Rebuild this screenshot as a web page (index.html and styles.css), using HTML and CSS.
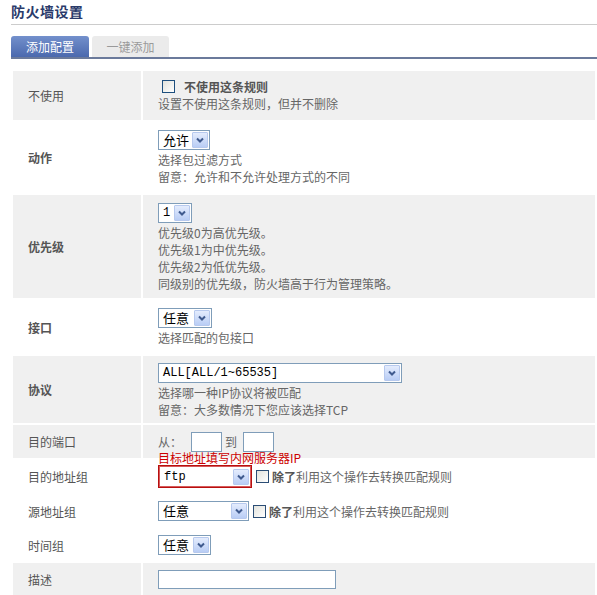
FILE: index.html
```html
<!DOCTYPE html>
<html lang="zh-CN">
<head>
<meta charset="utf-8">
<title>防火墙设置</title>
<link rel="stylesheet" href="styles.css">
</head>
<body>
<div class="page">
  <h1 class="title">防火墙设置</h1>
  <div class="tabs">
    <span class="tab active">添加配置</span>
    <span class="tab">一键添加</span>
  </div>
  <table class="form">
    <tr class="gray r1">
      <th>不使用</th>
      <td>
        <div class="line"><span class="check"></span><b class="strong">不使用这条规则</b></div>
        <div class="line">设置不使用这条规则，但并不删除</div>
      </td>
    </tr>
    <tr class="white r2">
      <th class="bold">动作</th>
      <td>
        <div class="selrow"><span class="select w52"><span class="val">允许</span><span class="arrow"><svg width="14" height="14" viewBox="0 0 14 14"><path d="M4 5.5 L7 8.5 L10 5.5" stroke="#3f5a8e" stroke-width="2" fill="none"/></svg></span></span></div>
        <div class="line">选择包过滤方式</div>
        <div class="line">留意：允许和不允许处理方式的不同</div>
      </td>
    </tr>
    <tr class="gray r3">
      <th class="bold">优先级</th>
      <td>
        <div class="selrow"><span class="select w34"><span class="val mono">1</span><span class="arrow"><svg width="14" height="14" viewBox="0 0 14 14"><path d="M4 5.5 L7 8.5 L10 5.5" stroke="#3f5a8e" stroke-width="2" fill="none"/></svg></span></span></div>
        <div class="line">优先级0为高优先级。</div>
        <div class="line">优先级1为中优先级。</div>
        <div class="line">优先级2为低优先级。</div>
        <div class="line">同级别的优先级，防火墙高于行为管理策略。</div>
      </td>
    </tr>
    <tr class="white r4">
      <th class="bold">接口</th>
      <td>
        <div class="selrow"><span class="select w54"><span class="val">任意</span><span class="arrow"><svg width="14" height="14" viewBox="0 0 14 14"><path d="M4 5.5 L7 8.5 L10 5.5" stroke="#3f5a8e" stroke-width="2" fill="none"/></svg></span></span></div>
        <div class="line">选择匹配的包接口</div>
      </td>
    </tr>
    <tr class="gray r5">
      <th class="bold">协议</th>
      <td>
        <div class="selrow"><span class="select w244"><span class="val mono">ALL[ALL/1~65535]</span><span class="arrow"><svg width="14" height="14" viewBox="0 0 14 14"><path d="M4 5.5 L7 8.5 L10 5.5" stroke="#3f5a8e" stroke-width="2" fill="none"/></svg></span></span></div>
        <div class="line">选择哪一种IP协议将被匹配</div>
        <div class="line">留意：大多数情况下您应该选择TCP</div>
      </td>
    </tr>
    <tr class="gray r6">
      <th>目的端口</th>
      <td class="mid">
        <div class="inline">从：<span class="input w31 gap-l"></span><span class="to">到</span><span class="input w31"></span></div>
      </td>
    </tr>
    <tr class="white r7">
      <th>目的地址组</th>
      <td class="mid">
        <div class="inline anchor">
          <span class="note">目标地址填写内网服务器IP</span>
          <span class="select w94 alert"><span class="val mono">ftp</span><span class="arrow"><svg width="14" height="14" viewBox="0 0 14 14"><path d="M4 5.5 L7 8.5 L10 5.5" stroke="#3f5a8e" stroke-width="2" fill="none"/></svg></span></span>
          <span class="check small"></span><b class="strong">除了</b><span>利用这个操作去转换匹配规则</span>
        </div>
      </td>
    </tr>
    <tr class="white r8">
      <th>源地址组</th>
      <td class="mid">
        <div class="inline">
          <span class="select w91"><span class="val">任意</span><span class="arrow"><svg width="14" height="14" viewBox="0 0 14 14"><path d="M4 5.5 L7 8.5 L10 5.5" stroke="#3f5a8e" stroke-width="2" fill="none"/></svg></span></span>
          <span class="check small"></span><b class="strong">除了</b><span>利用这个操作去转换匹配规则</span>
        </div>
      </td>
    </tr>
    <tr class="white r9">
      <th>时间组</th>
      <td class="mid">
        <div class="inline"><span class="select w53"><span class="val">任意</span><span class="arrow"><svg width="14" height="14" viewBox="0 0 14 14"><path d="M4 5.5 L7 8.5 L10 5.5" stroke="#3f5a8e" stroke-width="2" fill="none"/></svg></span></span></div>
      </td>
    </tr>
    <tr class="gray r10">
      <th>描述</th>
      <td class="mid">
        <div class="inline"><span class="input w178"></span></div>
      </td>
    </tr>
  </table>
</div>
</body>
</html>
```

FILE: styles.css
```css
html, body {
  margin: 0;
  padding: 0;
  background: #ffffff;
}
body {
  font-family: "Noto Sans CJK SC", "Liberation Sans", sans-serif;
  font-size: 12px;
  color: #666666;
  overflow: hidden;
}
.page {
  padding-left: 11px;
}
.title {
  margin: 0;
  padding-top: 2px;
  height: 22px;
  font-size: 14px;
  line-height: 18px;
  font-weight: bold;
  color: #2a3a6a;
  letter-spacing: 0.5px;
  border-bottom: 1px solid #cccccc;
}
.tabs {
  margin-top: 11px;
  display: flex;
  gap: 3px;
  border-bottom: 2px solid #6b7a9b;
}
.tab {
  width: 77px;
  height: 21px;
  line-height: 21px;
  text-align: center;
  border-radius: 3px 3px 0 0;
  background: #ebebeb;
  color: #9a9a9a;
  font-size: 12px;
}
.tab.active {
  width: 78px;
  background: linear-gradient(#7390cc, #4b69ae);
  color: #ffffff;
}
.form {
  margin-top: 10px;
  width: 586px;
  border-spacing: 2px;
  border-collapse: separate;
}
.form th {
  width: 113px;
  padding: 0 0 0 15px;
  text-align: left;
  font-weight: normal;
  color: #555555;
  vertical-align: middle;
}
.form th.bold {
  font-weight: bold;
}
.form td {
  padding: 7px 8px 8px 15px;
  vertical-align: top;
  line-height: 17px;
}
.form td.mid {
  padding-top: 0;
  padding-bottom: 0;
  vertical-align: middle;
}
.gray th, .gray td {
  background: #f0f0f0;
}
.white th, .white td {
  background: #ffffff;
}
.r1 td { padding-top: 7px; padding-bottom: 8px; }
.r3 td { padding-bottom: 6px; }
.r5 td { padding-top: 6px; padding-bottom: 5px; }
.r6 { height: 33px; }
.r7 { height: 33px; }
.r8 { height: 32px; }
.r9 { height: 32px; }
.r10 { height: 33px; }

.line {
  display: flex;
  align-items: center;
  height: 17px;
}
.strong {
  font-weight: bold;
  color: #555555;
}
.check {
  width: 11px;
  height: 11px;
  border: 1px solid #1e4f7e;
  background: linear-gradient(135deg, #e2e2dc, #ffffff);
  margin: 0 9px 0 4px;
  flex: none;
  display: inline-block;
}
.check.small {
  margin: 0 3px 0 4px;
  border-color: #2b4d75;
}
.selrow {
  height: 20px;
  margin-bottom: 2px;
}
.select {
  display: inline-flex;
  align-items: center;
  box-sizing: border-box;
  height: 20px;
  border: 1px solid #7f9db9;
  background: #ffffff;
  padding: 1px;
  vertical-align: middle;
}
.val {
  flex: 1;
  padding-left: 3px;
  color: #000000;
  font-size: 13px;
  line-height: 16px;
  white-space: nowrap;
}
.val.mono {
  font-family: "Liberation Mono", "Noto Sans CJK SC", monospace;
  font-size: 12px;
}
.arrow {
  box-sizing: border-box;
  width: 16px;
  height: 16px;
  display: flex;
  align-items: center;
  justify-content: center;
  background: linear-gradient(#e4ecfd, #b9cdf5);
  border: 1px solid #b7c9ee;
  border-radius: 1px;
  flex: none;
}
.w34 { width: 34px; }
.w52 { width: 52px; }
.w53 { width: 53px; }
.w54 { width: 54px; }
.w91 { width: 91px; }
.w94 { width: 94px; }
.w244 { width: 244px; }
.select.alert {
  height: 23px;
  border: 1px solid #b80f0f;
  box-shadow: inset 0 0 0 1px #d65a5a;
  padding: 2px;
}
.inline {
  display: flex;
  align-items: center;
  line-height: 17px;
}
.anchor {
  position: relative;
}
.note {
  position: absolute;
  left: 0;
  top: -13px;
  color: #cc0000;
  font-size: 12px;
  line-height: 12px;
  white-space: nowrap;
}
.input {
  display: inline-block;
  box-sizing: border-box;
  height: 20px;
  border: 1px solid #7f9db9;
  background: #ffffff;
}
.w31 { width: 31px; }
.w178 { width: 178px; height: 19px; }
.gap-l { margin-left: 9px; }
.to {
  margin: 0 6px 0 3px;
}
```
